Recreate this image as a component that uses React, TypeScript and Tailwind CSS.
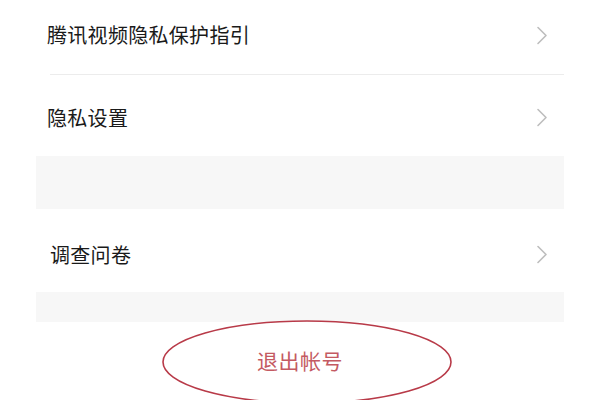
import { ReactNode } from 'react';

const cjk = { fontFamily: '"Noto Sans CJK SC", "Noto Sans", sans-serif' };

const Chevron = () => (
    <svg width="12" height="19" viewBox="0 0 12 19" fill="none">
        <path d="M2 1.5 L10 9.5 L2 17.5" stroke="#bdbdbd" strokeWidth="1.6" strokeLinecap="round" strokeLinejoin="round" />
    </svg>
);

const Row = ({ children, className }: { children: ReactNode; className: string }) => (
    <div className={`flex items-center justify-between pr-[16px] bg-white ${className}`}>
        <span className="text-[20px] leading-none text-[#1a1a1a] tracking-[0.3px]">{children}</span>
        <Chevron />
    </div>
);

export default function App() {
    return (
        <div className="relative w-[600px] h-[400px] overflow-hidden bg-white" style={cjk}>
            <div className="ml-[36px] w-[528px]">
                <Row className="h-[74px] pb-[4px] pl-[11px]">腾讯视频隐私保护指引</Row>
                <div className="ml-[14px] h-px bg-[#ececec]" />
                <Row className="h-[81px] pt-[4px] pl-[11px]">隐私设置</Row>
                <div className="h-[53px] bg-[#f7f7f7]" />
                <Row className="h-[83px] pt-[8px] pl-[14px]">调查问卷</Row>
                <div className="h-[30px] bg-[#f7f7f7]" />
                <div className="flex justify-center pt-[28px]">
                    <span className="text-[21px] leading-none text-[#c45a62] tracking-[0.5px]">退出帐号</span>
                </div>
            </div>

            {/* hand-drawn annotation circle */}
            <svg className="absolute left-0 top-0 pointer-events-none" width="600" height="400" viewBox="0 0 600 400">
                <ellipse cx="307" cy="362" rx="144" ry="41" fill="none" stroke="#b83a48" strokeWidth="1.6" />
            </svg>
        </div>
    );
}
